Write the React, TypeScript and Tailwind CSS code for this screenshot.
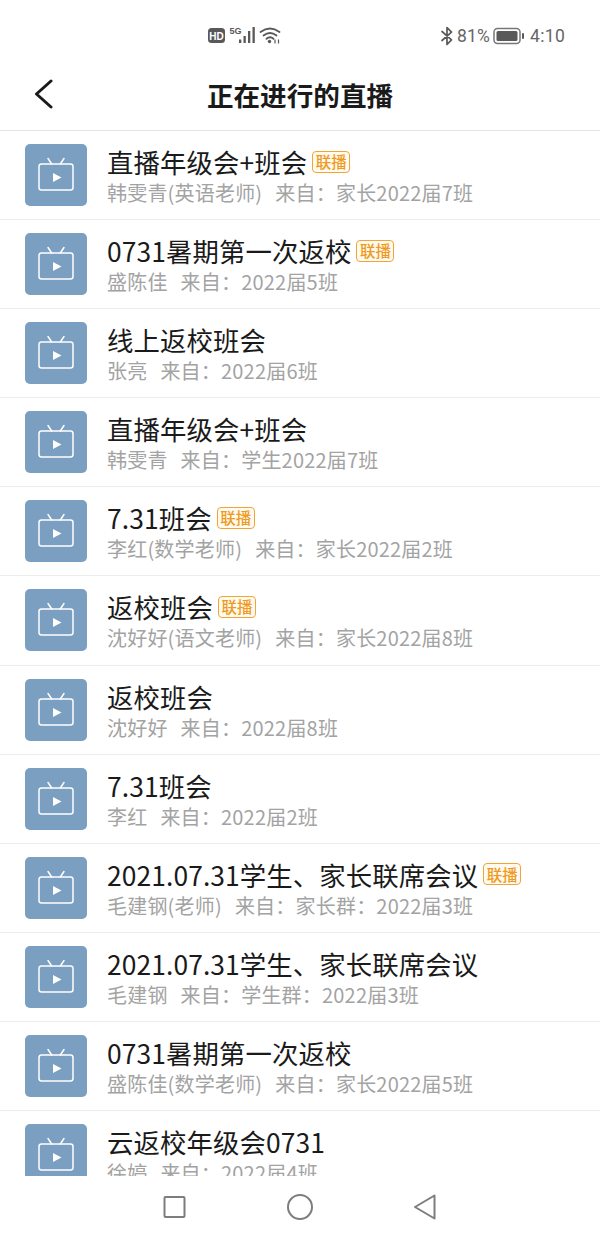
const rows = [
  { title: "直播年级会+班会", sub: "韩雯青(英语老师)", from: "家长2022届7班", lian: true },
  { title: "0731暑期第一次返校", sub: "盛陈佳", from: "2022届5班", lian: true },
  { title: "线上返校班会", sub: "张亮", from: "2022届6班" },
  { title: "直播年级会+班会", sub: "韩雯青", from: "学生2022届7班" },
  { title: "7.31班会", sub: "李红(数学老师)", from: "家长2022届2班", lian: true },
  { title: "返校班会", sub: "沈好好(语文老师)", from: "家长2022届8班", lian: true },
  { title: "返校班会", sub: "沈好好", from: "2022届8班" },
  { title: "7.31班会", sub: "李红", from: "2022届2班" },
  { title: "2021.07.31学生、家长联席会议", sub: "毛建钢(老师)", from: "家长群：2022届3班", lian: true },
  { title: "2021.07.31学生、家长联席会议", sub: "毛建钢", from: "学生群：2022届3班" },
  { title: "0731暑期第一次返校", sub: "盛陈佳(数学老师)", from: "家长2022届5班" },
  { title: "云返校年级会0731", sub: "徐婷", from: "2022届4班" },
];

function TvIcon() {
  return (
    <svg width="38" height="36" viewBox="0 0 38 36" fill="none" stroke="#fff" strokeWidth="1.5" strokeLinecap="round" strokeLinejoin="round">
      <path d="M11 1.5 L14.7 7 M27 1.5 L23.3 7" />
      <rect x="2" y="7" width="34" height="26" rx="2.5" />
      <path d="M16 16 L24.5 20.5 L16 25 Z" fill="#fff" stroke="none" />
    </svg>
  );
}

function StatusBar() {
  return (
    <div className="h-[60px] shrink-0 text-[#666] text-[17.5px] relative">
      <div className="absolute left-[208px] top-[20px] flex items-start">
        <svg width="76" height="26" viewBox="0 0 76 26" fill="none">
          <rect x="0" y="8" width="17" height="15" rx="3.5" fill="#595959" />
          <text x="8.5" y="19.5" textAnchor="middle" fontSize="10" fontWeight="700" fill="#fff" fontFamily="Liberation Sans, sans-serif">HD</text>
          <text x="21.5" y="13.5" fontSize="9" fontWeight="700" fill="#595959" fontFamily="Liberation Sans, sans-serif">5G</text>
          <rect x="31" y="19.5" width="2.3" height="3.5" fill="#595959" />
          <rect x="35.5" y="16" width="2.3" height="7" fill="#595959" />
          <rect x="40" y="11" width="2.3" height="12" fill="#595959" />
          <rect x="44.5" y="7" width="2.3" height="16" fill="#595959" />
          <path d="M52.5 12 Q62 5 71.5 12 M55.5 15.5 Q62 10.5 68.5 15.5 M58.5 18.8 Q62 15.8 65.5 18.8" stroke="#595959" strokeWidth="1.8" strokeLinecap="round" />
          <circle cx="61.5" cy="21.5" r="1.7" fill="#595959" />
          <path d="M67 19.5 V23.5 M70.5 19.5 V23.5" stroke="#595959" strokeWidth="1.2" />
        </svg>
      </div>
      <div className="absolute left-[440px] top-[26px] flex items-center">
        <svg width="14" height="20" viewBox="0 0 14 20" fill="none" stroke="#595959" strokeWidth="1.7" strokeLinejoin="round" strokeLinecap="round">
          <path d="M2 5.5 L11.5 13.8 L7 18.5 V1.5 L11.5 6.2 L2 14.5" />
        </svg>
        <span className="ml-[3px] leading-[20px] tracking-[0.2px]" style={{ fontFamily: "Roboto, sans-serif" }}>81%</span>
        <svg className="ml-[3px]" width="32" height="18" viewBox="0 0 32 18" fill="none">
          <rect x="1" y="1.5" width="26" height="15" rx="3.5" stroke="#777" strokeWidth="1.5" />
          <rect x="3.5" y="4" width="21" height="10" rx="1.5" fill="#595959" />
          <rect x="29" y="6" width="2" height="6" rx="1" fill="#595959" />
        </svg>
        <span className="ml-[5px] leading-[20px] tracking-[0.3px]" style={{ fontFamily: "Roboto, sans-serif" }}>4:10</span>
      </div>
    </div>
  );
}

function Row({ row }: { row: (typeof rows)[number] }) {
  return (
    <div className="h-[89.1px] shrink-0 flex items-start border-b border-[#ececec] pl-[25px] pt-[13px]">
      <div className="w-[62px] h-[62px] shrink-0 rounded-[5px] bg-[#7a9fc0] flex items-center justify-center">
        <TvIcon />
      </div>
      <div className="ml-[20px] min-w-0">
        <div className="flex items-center h-[35px] whitespace-nowrap">
          <span className="text-[26.4px] leading-[35px] text-[#1a1a1a] tracking-[0.1px]">{row.title}</span>
          {row.lian && (
            <span className="ml-[5px] h-[22px] w-[38px] flex items-center justify-center rounded-[4px] border-[1.5px] border-[#f3a436] bg-[#fffaf0] text-[#ee9a22] text-[15.5px] font-medium leading-none">
              联播
            </span>
          )}
        </div>
        <div className="h-[28px] text-[20px] leading-[28px] text-[#a3a3a3] whitespace-nowrap tracking-[0.2px]">
          {row.sub}<span className="ml-[13px]">来自：</span>{row.from}
        </div>
      </div>
    </div>
  );
}

export default function App() {
  return (
    <div
      className="w-[600px] h-[1237px] bg-white flex flex-col overflow-hidden"
      style={{ fontFamily: '"Noto Sans CJK SC", "Noto Sans", sans-serif' }}
    >
      <StatusBar />
      <div className="h-[71px] shrink-0 border-b border-[#e4e4e4] flex items-center justify-center relative">
        <svg className="absolute left-[34px] top-[19px]" width="20" height="30" viewBox="0 0 20 30" fill="none" stroke="#1a1a1a" strokeWidth="3" strokeLinecap="round" strokeLinejoin="round">
          <path d="M17 2 L2.5 15 L17 28" />
        </svg>
        <span className="text-[26.6px] font-bold text-[#1a1a1a] leading-none">正在进行的直播</span>
      </div>
      <div className="h-[1045px] shrink-0 overflow-hidden flex flex-col">
        {rows.map((r, i) => (
          <Row key={i} row={r} />
        ))}
      </div>
      <div className="flex-1 flex items-center">
        <svg className="ml-[160px]" width="290" height="30" viewBox="0 0 290 30" fill="none" stroke="#7d7d7d" strokeWidth="2" strokeLinejoin="round">
          <rect x="4.5" y="5" width="20" height="20" rx="1" />
          <circle cx="140" cy="15" r="12" />
          <path d="M274.5 3.5 V26.5 L255 15 Z" />
        </svg>
      </div>
    </div>
  );
}
